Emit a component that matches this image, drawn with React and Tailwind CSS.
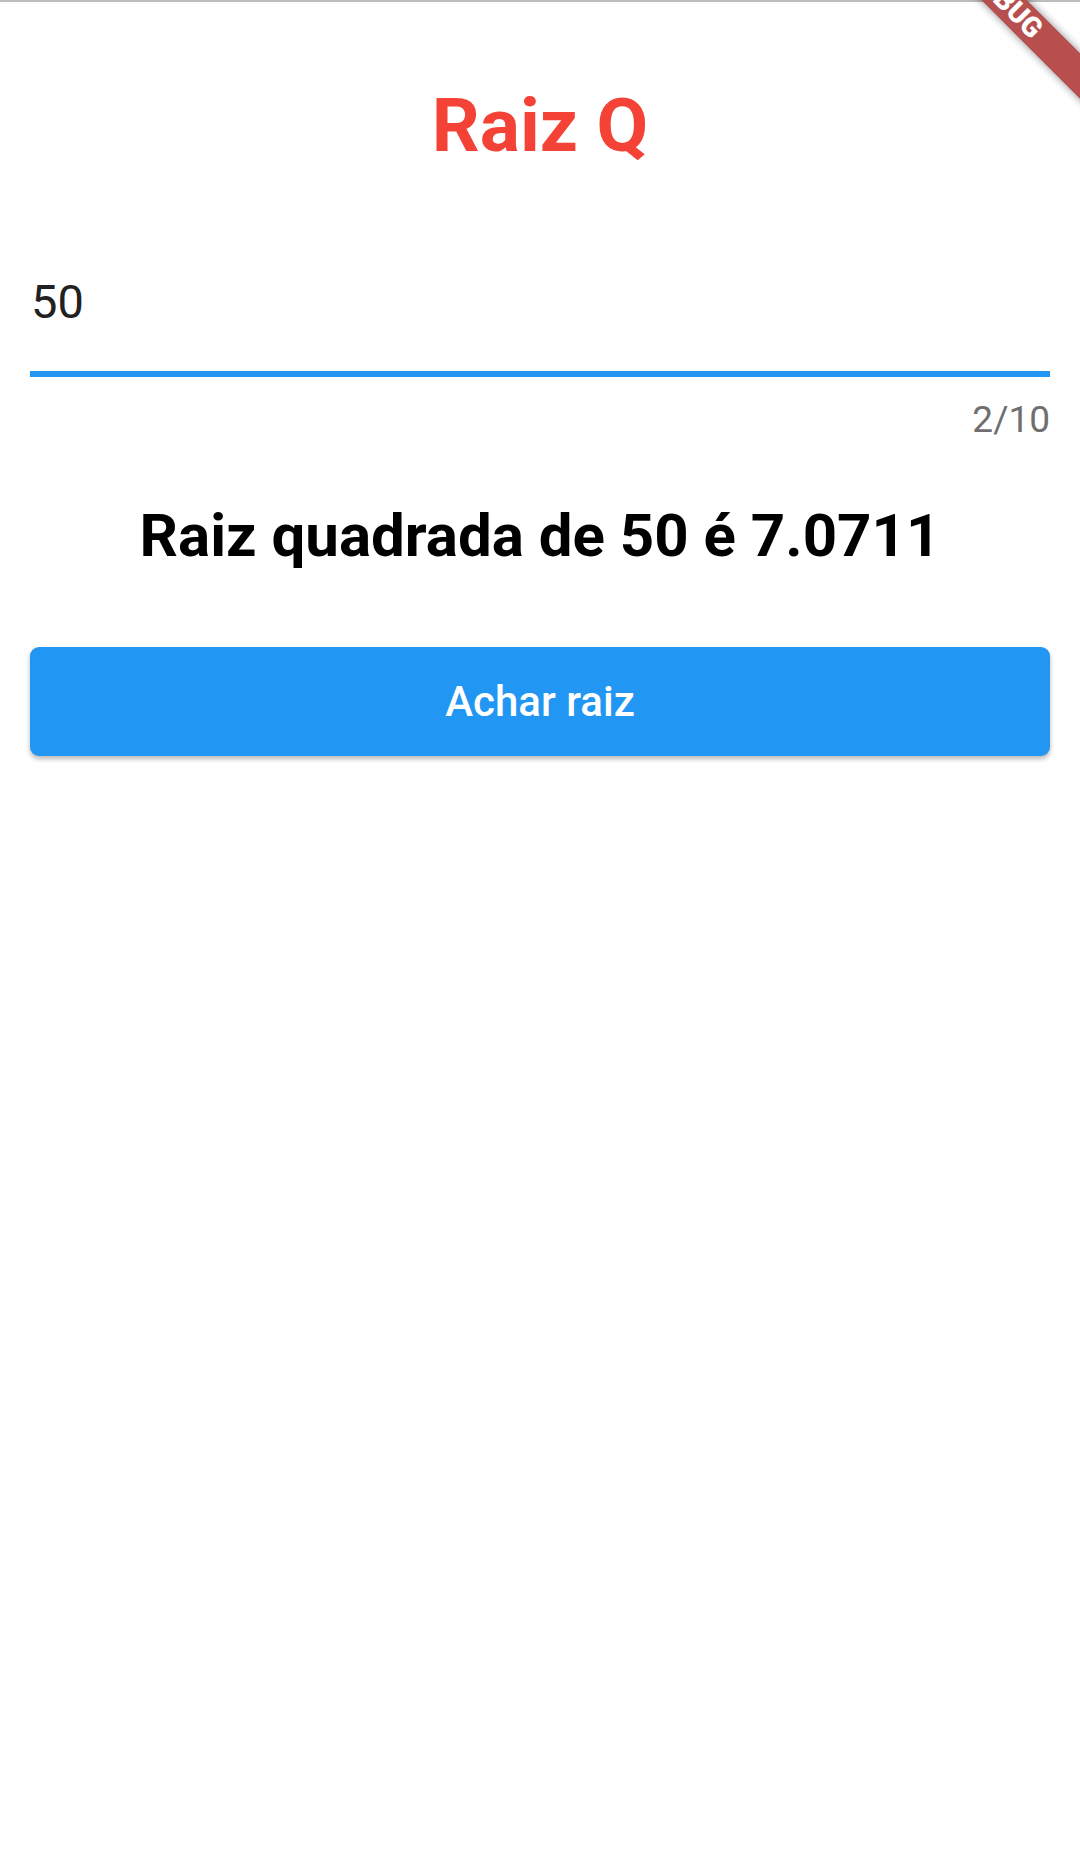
export default function App() {
  return (
    <div className="relative w-[1080px] h-[1850px] overflow-hidden bg-white font-['Roboto',sans-serif]">
      <div className="h-[2px] bg-[#bdbdbd]" />
      <h1 className="mt-[86px] text-center text-[75px] leading-none font-bold text-[#f44336]">
        Raiz Q
      </h1>
      <div className="px-[30px]">
        <RootField value="50" max={10} />
        <p className="mt-[68px] text-center text-[60px] leading-none font-bold text-black">
          Raiz quadrada de 50 é 7.0711
        </p>
        <button className="mt-[81px] w-full h-[109px] rounded-[9px] bg-[#2196f3] text-white text-[42px] font-medium leading-none shadow-[0_3px_5px_rgba(0,0,0,0.28)]">
          Achar raiz
        </button>
      </div>
      <DebugBanner />
    </div>
  );
}

function RootField({ value, max }) {
  return (
    <div className="mt-[115px]">
      <div className="pl-px text-[47px] leading-none text-[#212121]">
        {value}
      </div>
      <div className="mt-[46px] h-[6px] bg-[#2196f3]" />
      <div className="mt-[24px] text-right text-[37px] leading-none text-[#6f6f6f]">
        {value.length}/{max}
      </div>
    </div>
  );
}

function DebugBanner() {
  return (
    <div className="absolute left-[876px] top-[-14px] w-[260px] h-[32px] rotate-45 bg-[#b84f4f] shadow-[0_0_8px_rgba(0,0,0,0.45)] flex items-center justify-center">
      <span className="text-white text-[28px] font-black leading-none">
        DEBUG
      </span>
    </div>
  );
}
